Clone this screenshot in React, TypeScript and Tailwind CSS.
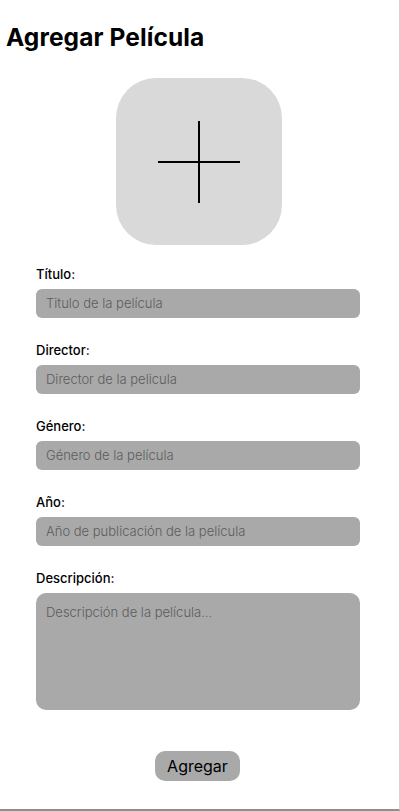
import React from "react";

const font = { fontFamily: "Inter, 'Noto Sans', sans-serif" };

function Field({ label, placeholder }: { label: string; placeholder: string }) {
  return (
    <div className="flex flex-col">
      <label className="h-5 text-[13px] leading-5 font-medium text-black">{label}</label>
      <div className="mt-[5px] h-[29px] w-[324px] rounded-[6px] bg-[#a9a9a9] flex items-center pl-[10px]">
        <span className="text-[13px] font-light text-[#5c5c5c]">{placeholder}</span>
      </div>
    </div>
  );
}

export default function App() {
  return (
    <div
      className="w-[400px] h-[811px] bg-white border-r border-r-[#d4d4d4] border-b-2 border-b-[#8f8f8f] flex flex-col"
      style={font}
    >
      <h1 className="mt-[21px] ml-[6px] text-[24.5px] leading-8 font-bold text-black tracking-[0.1px]">
        Agregar Película
      </h1>
      <div className="mt-[25px] ml-[116px] w-[166px] h-[167px] rounded-[40px] bg-[#d9d9d9] flex items-center justify-center">
        <svg width="82" height="82" viewBox="0 0 82 82">
          <line x1="41" y1="0" x2="41" y2="82" stroke="#000" strokeWidth="2" />
          <line x1="0" y1="41" x2="82" y2="41" stroke="#000" strokeWidth="2" />
        </svg>
      </div>
      <div className="mt-[19px] ml-9 flex flex-col gap-[22px]">
        <Field label="Título:" placeholder="Titulo de la película" />
        <Field label="Director:" placeholder="Director de la pelicula" />
        <Field label="Género:" placeholder="Género de la película" />
        <Field label="Año:" placeholder="Año de publicación de la película" />
        <div className="flex flex-col">
          <label className="h-5 text-[13px] leading-5 font-medium text-black">Descripción:</label>
          <div className="mt-[5px] h-[117px] w-[324px] rounded-[10px] bg-[#a9a9a9] pl-[10px] pt-[6px]">
            <span className="text-[13px] font-light text-[#5c5c5c]">Descripción de la película...</span>
          </div>
        </div>
      </div>
      <div className="mt-[41px] ml-[155px] w-[85px] h-[30px] rounded-[10px] bg-[#a9a9a9] flex items-center justify-center">
        <span className="text-[16px] text-black">Agregar</span>
      </div>
    </div>
  );
}
